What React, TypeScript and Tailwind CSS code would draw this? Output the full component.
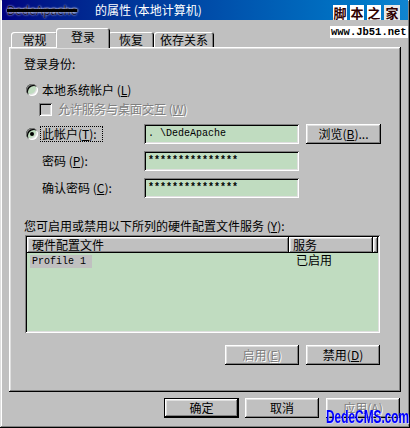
import React from 'react';

const FONT = { fontFamily: '"Noto Sans CJK SC", "Liberation Sans", sans-serif' };

const raised =
  'shadow-[inset_-1px_-1px_#000,inset_1px_1px_#fff,inset_-2px_-2px_#808080,inset_2px_2px_#dfdfdf]';
const sunken =
  'shadow-[inset_1px_1px_#808080,inset_-1px_-1px_#fff,inset_2px_2px_#000,inset_-2px_-2px_#dfdfdf]';
const disabledText = 'text-[#808080] [text-shadow:1px_1px_0_#fff]';

const Key: React.FC<{ k: string }> = ({ k }) => (
  <span>
    {' ('}
    <u>{k}</u>)
  </span>
);

const Radio: React.FC<{ checked?: boolean }> = ({ checked }) => (
  <div
    className={`w-[12px] h-[12px] shrink-0 rounded-full bg-[#c0dcc0] flex items-center justify-center ${sunken}`}
  >
    {checked && <div className="w-[4px] h-[4px] rounded-full bg-black" />}
  </div>
);

const Field: React.FC<{ value: string; bold?: boolean }> = ({ value, bold }) => (
  <div
    className={`w-[155px] h-[20px] bg-[#c0dcc0] flex items-center pl-[4px] text-[10px] text-black ${sunken} ${
      bold ? 'font-bold' : ''
    }`}
    style={{ fontFamily: '"Liberation Mono", monospace' }}
  >
    {value}
  </div>
);

const Btn: React.FC<{ children: React.ReactNode; w: string; disabled?: boolean; def?: boolean }> = ({
  children,
  w,
  disabled,
  def,
}) => (
  <div
    className={`${w} h-[20px] shrink-0 bg-[#c0c0c0] flex items-center justify-center text-[12px] leading-[12px] ${
      def
        ? 'shadow-[inset_0_0_0_1px_#000,inset_-2px_-2px_#000,inset_2px_2px_#fff,inset_-3px_-3px_#808080,inset_3px_3px_#dfdfdf]'
        : raised
    } ${disabled ? disabledText : 'text-black'}`}
  >
    {children}
  </div>
);

const Tab: React.FC<{ label: string; w: string; active?: boolean }> = ({ label, w, active }) => (
  <div
    className={`${w} rounded-t-[3px] bg-[#c0c0c0] flex justify-center text-[12px] leading-[12px] text-black shadow-[inset_1px_1px_#fff,inset_-1px_0_#000,inset_-2px_0_#808080] ${
      active ? 'h-[20px] -mb-[1px] -mx-[2px] pt-[3px] relative z-10' : 'h-[15px] pt-[2px]'
    }`}
  >
    {label}
  </div>
);

export default function App() {
  return (
    <div
      className="relative w-[410px] h-[428px] bg-[#c0c0c0] flex flex-col overflow-hidden shadow-[inset_-1px_-1px_#000,inset_1px_1px_#dfdfdf,inset_-2px_-2px_#808080,inset_2px_2px_#fff]"
      style={FONT}
    >
      {/* title bar */}
      <div className="mx-[2px] h-[20px] shrink-0 bg-gradient-to-r from-[#000080] to-[#1084d0] flex items-center pl-[5px] text-[12px] leading-[12px] text-white">
        <span className="w-[88px] text-[#0c0c30] [text-shadow:0_0_2px_#fff] line-through decoration-[#000] decoration-[3px]">
          DedeApache
        </span>
        <span>的属性 (本地计算机)</span>
      </div>

      {/* tabs */}
      <div className="mt-[8px] h-[19px] pl-[11px] flex items-end shrink-0">
        <Tab label="常规" w="w-[47px]" />
        <Tab label="登录" w="w-[54px]" active />
        <Tab label="恢复" w="w-[46px]" />
        <Tab label="依存关系" w="w-[60px]" />
      </div>

      {/* tab panel */}
      <div className={`ml-[9px] w-[392px] h-[345px] shrink-0 flex flex-col text-[12px] text-black ${raised}`}>
        <div className="ml-[15px] mt-[11px] h-[12px] leading-[12px]">登录身份:</div>

        <div className="ml-[17px] mt-[12px] h-[16px] flex items-center leading-[12px]">
          <Radio />
          <span className="ml-[4px]">
            本地系统帐户
            <Key k="L" />
          </span>
        </div>

        <div className="ml-[30px] mt-[3px] h-[16px] flex items-center leading-[12px]">
          <div className={`w-[13px] h-[13px] bg-[#c0c0c0] ${sunken}`} />
          <span className={`ml-[6px] ${disabledText}`}>
            允许服务与桌面交互
            <Key k="W" />
          </span>
        </div>

        <div className="ml-[17px] mt-[7px] h-[20px] flex items-center leading-[12px]">
          <Radio checked />
          <div className="ml-[2px] w-[63px] h-[16px] border border-dotted border-black flex items-center pl-[1px]">
            此帐户
            <Key k="T" />:
          </div>
          <div className="ml-[41px]">
            <Field value=". \DedeApache" />
          </div>
          <div className="ml-[7px]">
            <Btn w="w-[75px]">
              浏览
              <Key k="B" />
              ...
            </Btn>
          </div>
        </div>

        <div className="ml-[33px] mt-[7px] h-[20px] flex items-center leading-[12px]">
          <span className="w-[102px]">
            密码
            <Key k="P" />:
          </span>
          <Field value="***************" bold />
        </div>

        <div className="ml-[33px] mt-[7px] h-[20px] flex items-center leading-[12px]">
          <span className="w-[102px]">
            确认密码
            <Key k="C" />:
          </span>
          <Field value="***************" bold />
        </div>

        <div className="ml-[15px] mt-[20px] h-[16px] leading-[16px]">
          您可启用或禁用以下所列的硬件配置文件服务
          <Key k="Y" />:
        </div>

        {/* list view */}
        <div className={`ml-[16px] mt-[1px] w-[355px] h-[98px] bg-[#c0dcc0] p-[2px] flex flex-col ${sunken}`}>
          <div className="h-[16px] flex shrink-0 leading-[16px]">
            <div className={`w-[262px] bg-[#c0c0c0] pl-[5px] ${raised}`}>硬件配置文件</div>
            <div className={`w-[84px] bg-[#c0c0c0] pl-[4px] ${raised}`}>服务</div>
            <div className={`flex-1 bg-[#c0c0c0] ${raised}`} />
          </div>
          <div className="h-[13px] flex items-center leading-[13px]">
            <div className="w-[262px] pl-[3px]">
              <span
                className="inline-block w-[62px] h-[13px] bg-[#c0c0c0] pl-[2px] text-[10px]"
                style={{ fontFamily: '"Liberation Mono", monospace' }}
              >
                Profile 1
              </span>
            </div>
            <div className="pl-[7px]">已启用</div>
          </div>
        </div>

        <div className="ml-[216px] mt-[12px] flex gap-[7px]">
          <Btn w="w-[74px]" disabled>
            启用
            <Key k="E" />
          </Btn>
          <Btn w="w-[74px]">
            禁用
            <Key k="D" />
          </Btn>
        </div>
      </div>

      {/* dialog buttons */}
      <div className="mt-[6px] ml-[164px] flex">
        <Btn w="w-[75px]" def>
          确定
        </Btn>
        <div className="ml-[6px]">
          <Btn w="w-[74px]">取消</Btn>
        </div>
        <div className="ml-[7px]">
          <Btn w="w-[74px]" disabled>
            应用
            <Key k="A" />
          </Btn>
        </div>
      </div>

      {/* watermarks */}
      <div className="absolute top-[5px] left-[333px] flex gap-[3px] text-[13px] leading-[15px] text-[#300000] font-bold">
        <span className="bg-white w-[14px] h-[15px] text-center">脚</span>
        <span className="bg-white w-[14px] h-[15px] text-center">本</span>
        <span className="bg-white w-[14px] h-[15px] text-center">之</span>
        <span className="bg-[#e8e8e8] w-[16px] h-[15px] text-center">家</span>
      </div>
      <div
        className="absolute top-[26px] left-[330px] bg-white px-[1px] h-[12px] leading-[12px] text-[10.5px] font-bold text-black"
        style={{ fontFamily: '"Liberation Mono", monospace' }}
      >
        www.Jb51.net
      </div>
      <div
        className="absolute top-[407px] left-[326px] text-[18px] leading-[20px] font-bold text-[#0000ff] origin-left scale-x-[0.66] [text-shadow:1px_1px_0_#c8c8ff]"
        style={{ fontFamily: '"Liberation Sans", sans-serif' }}
      >
        DedeCMS.com
      </div>
    </div>
  );
}
